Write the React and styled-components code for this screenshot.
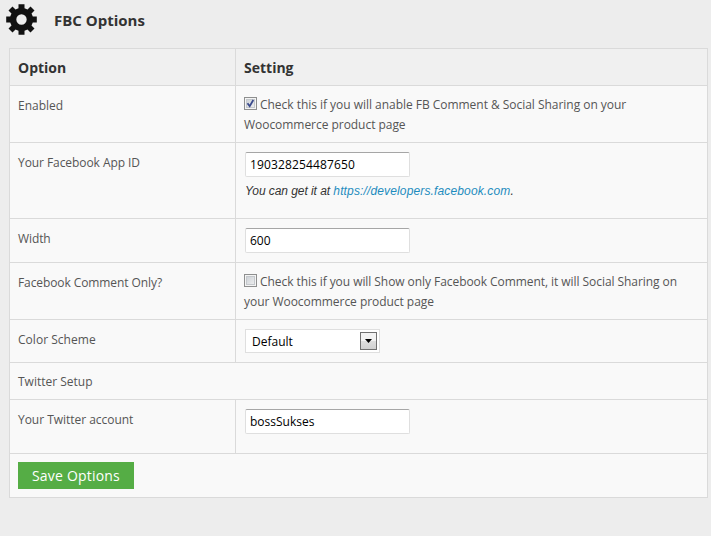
import React from 'react';
import styled, { createGlobalStyle } from 'styled-components';

const GlobalStyle = createGlobalStyle`
  * { box-sizing: border-box; }
  html, body { margin: 0; background: #ededed; }
  body { font-family: "Open Sans", sans-serif; font-size: 12px; color: #555; overflow: hidden; }
`;

const Page = styled.main`
  width: 711px;
  height: 536px;
  padding-left: 9px;
  background: #ededed;
`;

const Header = styled.header`
  display: flex;
  height: 48px;
  align-items: flex-start;
  margin-left: -3px;
  padding-top: 4px;
`;

const Title = styled.h1`
  margin: 6px 0 0 17px;
  font-size: 15px;
  line-height: 20px;
  font-weight: 700;
  letter-spacing: ${p => p.$spacing || 0}px;
  color: #333;
`;

const Table = styled.section`
  width: 699px;
  border: 1px solid #dadada;
  border-bottom: 0;
  background: #f9f9f9;
`;

const Row = styled.div`
  display: grid;
  grid-template-columns: ${p => (p.$full ? '1fr' : '225px 1fr')};
  height: ${p => p.$height}px;
  border-bottom: 1px solid #dadada;
  background: ${p => (p.$head ? '#f0f0f0' : 'transparent')};
`;

const Cell = styled.div`
  padding: ${p => p.$top ?? 9}px 8px 0;
  line-height: 20px;
  white-space: nowrap;
  & + & { border-left: 1px solid #dadada; }
`;

const Heading = styled.span`
  font-size: 14px;
  font-weight: 700;
  color: #333;
`;

const Text = styled.span`
  letter-spacing: ${p => p.$spacing || 0}px;
`;

const CheckLine = styled.label`
  display: flex;
  align-items: flex-start;
  gap: 3px;
`;

const Check = styled.span`
  display: grid;
  place-items: center;
  width: 13px;
  height: 13px;
  margin-top: 2px;
  border: 1px solid #8e8f8f;
  background: linear-gradient(135deg, #c6cbd1, #f4f4f4);
  box-shadow: inset 0 0 0 1px #f4f4f4, inset 0 0 0 2px #c4c8cc;
`;

const Field = styled.input`
  display: block;
  width: 165px;
  height: 25px;
  margin: 0 0 0 1px;
  padding: 0 4px 1px;
  border: 1px solid #dfdfdf;
  border-top-color: #a6a6a6;
  border-radius: 2px;
  outline: 0;
  background: #fff;
  font: 12px "Open Sans", sans-serif;
  letter-spacing: ${p => p.$spacing || 0}px;
  color: #000;
`;

const Hint = styled.p`
  margin: 5px 0 0 1px;
  font: italic 12px/18px "Liberation Sans", Arial, sans-serif;
  letter-spacing: -0.06px;
  color: #333;
`;

const Link = styled.a`
  letter-spacing: 0.14px;
  color: #1e8cbe;
`;

const Select = styled.button`
  display: flex;
  align-items: center;
  justify-content: space-between;
  width: 135px;
  height: 24px;
  margin: 0 0 0 1px;
  padding: 0 2px 0 6px;
  border: 1px solid #dfdfdf;
  background: #fff;
  font: 12px "Open Sans", sans-serif;
  color: #000;
`;

const Arrow = styled.span`
  display: grid;
  place-items: center;
  width: 17px;
  height: 18px;
  border: 1px solid #707070;
  background: linear-gradient(#f2f2f2 0 50%, #dedede 50%, #d0d0d0);
`;

const Save = styled.button`
  display: block;
  width: 116px;
  height: 27px;
  padding: 0;
  border: 0;
  background: #55ad45;
  font: 14px/27px "Open Sans", sans-serif;
  letter-spacing: 0.2px;
  color: #fff;
`;

function Gear() {
  return (
    <svg width="31" height="31" viewBox="-15.5 -15.5 31 31" fill="#111">
      <path
        fillRule="evenodd"
        d="M-3-15.3H3V-11.3L6-10 9-13 13-9 10-6 11.3-3H15.3V3H11.3L10 6 13 9 9 13 6 10 3 11.3V15.3H-3V11.3L-6 10-9 13-13 9-10 6-11.3 3H-15.3V-3H-11.3L-10-6-13-9-9-13-6-10-3-11.3ZM0-5.2A5.2 5.2 0 1 0 0 5.2 5.2 5.2 0 1 0 0-5.2Z"
      />
    </svg>
  );
}

function CheckBox({ checked }) {
  return (
    <Check>
      {checked && (
        <svg width="9" height="9" viewBox="0 0 9 9">
          <path d="M1.5 4.2 3.7 7.2 7.3 1" fill="none" stroke="#3a4a8c" strokeWidth="1.8" />
        </svg>
      )}
    </Check>
  );
}

export default function App() {
  return (
    <>
      <GlobalStyle />
      <Page>
        <Header>
          <Gear />
          <Title>FBC Options</Title>
        </Header>
        <Table>
          <Row $height={37} $head>
            <Cell><Heading>Option</Heading></Cell>
            <Cell><Heading>Setting</Heading></Cell>
          </Row>
          <Row $height={57}>
            <Cell $top={10}><Text>Enabled</Text></Cell>
            <Cell $top={9}>
              <CheckLine>
                <CheckBox checked />
                <Text $spacing={-0.03}>Check this if you will anable FB Comment &amp; Social Sharing on your</Text>
              </CheckLine>
              <Text $spacing={-0.04}>Woocommerce product page</Text>
            </Cell>
          </Row>
          <Row $height={76}>
            <Cell $top={10}><Text $spacing={-0.07}>Your Facebook App ID</Text></Cell>
            <Cell>
              <Field $spacing={0.13} defaultValue="190328254487650" />
              <Hint>You can get it at <Link>https://developers.facebook.com</Link>.</Hint>
            </Cell>
          </Row>
          <Row $height={44}>
            <Cell $top={10}><Text $spacing={-0.1}>Width</Text></Cell>
            <Cell><Field defaultValue="600" /></Cell>
          </Row>
          <Row $height={57}>
            <Cell $top={10}><Text $spacing={-0.09}>Facebook Comment Only?</Text></Cell>
            <Cell $top={9}>
              <CheckLine>
                <CheckBox />
                <Text $spacing={-0.06}>Check this if you will Show only Facebook Comment, it will Social Sharing on</Text>
              </CheckLine>
              <Text $spacing={-0.04}>your Woocommerce product page</Text>
            </Cell>
          </Row>
          <Row $height={43}>
            <Cell $top={10}><Text $spacing={0.03}>Color Scheme</Text></Cell>
            <Cell>
              <Select>
                Default
                <Arrow>
                  <svg width="7" height="4" viewBox="0 0 7 4"><path d="M0 0H7L3.5 4Z" /></svg>
                </Arrow>
              </Select>
            </Cell>
          </Row>
          <Row $height={37} $full>
            <Cell><Text>Twitter Setup</Text></Cell>
          </Row>
          <Row $height={54}>
            <Cell $top={10}><Text $spacing={-0.03}>Your Twitter account</Text></Cell>
            <Cell><Field defaultValue="bossSukses" /></Cell>
          </Row>
          <Row $height={44} $full>
            <Cell $top={8}><Save>Save Options</Save></Cell>
          </Row>
        </Table>
      </Page>
    </>
  );
}
